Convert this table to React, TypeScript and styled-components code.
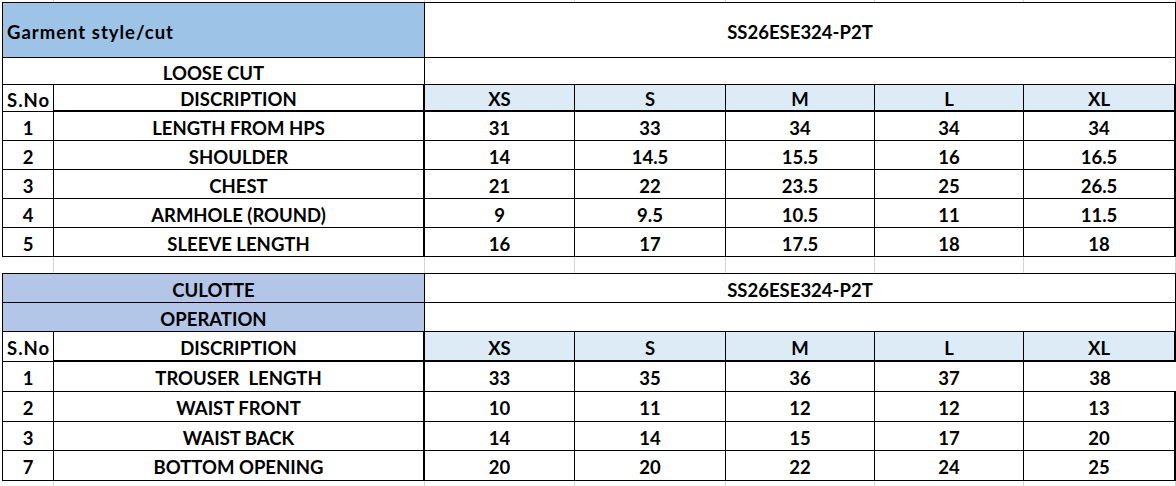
import React from "react";
import styled, { createGlobalStyle, css } from "styled-components";

type Edge = "thin" | "thick" | "grid" | undefined;

const GlobalStyle = createGlobalStyle`
  body {
    margin: 0;
    background: #fff;
    font-family: Lato, "Open Sans", sans-serif;
    color: #000;
  }
`;

const COLS = "52px 371px 150px 151px 149px 149px 152px";

const SIZES = ["XS", "S", "M", "L", "XL"];

const TOP_ROWS: [string, string, string[]][] = [
  ["1", "LENGTH FROM HPS", ["31", "33", "34", "34", "34"]],
  ["2", "SHOULDER", ["14", "14.5", "15.5", "16", "16.5"]],
  ["3", "CHEST", ["21", "22", "23.5", "25", "26.5"]],
  ["4", "ARMHOLE (ROUND)", ["9", "9.5", "10.5", "11", "11.5"]],
  ["5", "SLEEVE LENGTH", ["16", "17", "17.5", "18", "18"]],
];

const BOTTOM_ROWS: [string, string, string[]][] = [
  ["1", "TROUSER  LENGTH", ["33", "35", "36", "37", "38"]],
  ["2", "WAIST FRONT", ["10", "11", "12", "12", "13"]],
  ["3", "WAIST BACK", ["14", "14", "15", "17", "20"]],
  ["7", "BOTTOM OPENING", ["20", "20", "22", "24", "25"]],
];

const edge = (e: Edge) => {
  if (e === "thin") return "1px solid #000";
  if (e === "thick") return "2px solid #000";
  if (e === "grid") return "1px solid #d4d4d4";
  return "0";
};

const Sheet = styled.div`
  width: 1174px;
  padding-left: 2px;
`;

const Row = styled.div<{ $h: number }>`
  display: grid;
  grid-template-columns: ${COLS};
  height: ${(p) => p.$h}px;
`;

const Cell = styled.div<{
  $span?: number;
  $fill?: string;
  $left?: boolean;
  $loose?: boolean;
  $t?: Edge;
  $r?: Edge;
  $b?: Edge;
  $l?: Edge;
}>`
  box-sizing: border-box;
  grid-column: span ${(p) => p.$span ?? 1};
  display: flex;
  align-items: center;
  justify-content: ${(p) => (p.$left ? "flex-start" : "center")};
  padding: 3px 0 0 ${(p) => (p.$left ? "4px" : "0")};
  background: ${(p) => p.$fill ?? "transparent"};
  font-size: 18.5px;
  font-weight: 700;
  letter-spacing: ${(p) => (p.$loose ? "1px" : "0")};
  white-space: pre;
  ${(p) => css`
    border-top: ${edge(p.$t)};
    border-right: ${edge(p.$r)};
    border-bottom: ${edge(p.$b)};
    border-left: ${edge(p.$l)};
  `}
`;

function Gap({ h }: { h: number }) {
  return (
    <Row $h={h}>
      {Array.from({ length: 7 }).map((_, i) => (
        <Cell key={i} $r="grid" />
      ))}
    </Row>
  );
}

function SizeHeader({ h }: { h: number }) {
  return (
    <Row $h={h}>
      <Cell $left $loose $l="thin" $r="thin" $b="thin">
        S.No
      </Cell>
      <Cell $r="thick" $b="thick">
        DISCRIPTION
      </Cell>
      {SIZES.map((s, i) => (
        <Cell
          key={s}
          $fill="#ddebf7"
          $r={i === SIZES.length - 1 ? "thick" : "thin"}
          $b="thick"
        >
          {s}
        </Cell>
      ))}
    </Row>
  );
}

function MeasureRow({
  h,
  no,
  label,
  values,
  openRight,
}: {
  h: number;
  no: string;
  label: string;
  values: string[];
  openRight?: boolean;
}) {
  return (
    <Row $h={h}>
      <Cell $l="thin" $r="thin" $b="thin">
        {no}
      </Cell>
      <Cell $r="thick" $b="thin">
        {label}
      </Cell>
      {values.map((v, i) => (
        <Cell
          key={i}
          $r={i === values.length - 1 ? (openRight ? undefined : "thick") : "thin"}
          $b="thin"
        >
          {v}
        </Cell>
      ))}
    </Row>
  );
}

export default function App() {
  return (
    <>
      <GlobalStyle />
      <Sheet>
        <Gap h={2} />
        <Row $h={56}>
          <Cell $span={2} $left $loose $fill="#9dc3e6" $t="thin" $l="thin" $r="thin" $b="thin">
            Garment style/cut
          </Cell>
          <Cell $span={5} $t="thin" $r="thin" $b="thin">
            SS26ESE324-P2T
          </Cell>
        </Row>
        <Row $h={27}>
          <Cell $span={2} $l="thin" $r="thin" $b="thin">
            LOOSE CUT
          </Cell>
          <Cell $span={5} $r="thin" $b="thin" />
        </Row>
        <SizeHeader h={27} />
        {TOP_ROWS.map(([no, label, values]) => (
          <MeasureRow key={no} h={29} no={no} label={label} values={values} />
        ))}
        <Gap h={16} />
        <Row $h={30}>
          <Cell $span={2} $fill="#b4c6e7" $t="thin" $l="thin" $r="thin" $b="thin">
            CULOTTE
          </Cell>
          <Cell $span={5} $t="thin" $r="thin" $b="thin">
            SS26ESE324-P2T
          </Cell>
        </Row>
        <Row $h={29}>
          <Cell $span={2} $fill="#b4c6e7" $l="thin" $r="thin" $b="thin">
            OPERATION
          </Cell>
          <Cell $span={5} $r="thin" $b="thin" />
        </Row>
        <SizeHeader h={30} />
        {BOTTOM_ROWS.map(([no, label, values], i) => (
          <MeasureRow
            key={no}
            h={i === 2 ? 29 : 30}
            no={no}
            label={label}
            values={values}
            openRight={i === 0}
          />
        ))}
        <Gap h={5} />
      </Sheet>
    </>
  );
}
